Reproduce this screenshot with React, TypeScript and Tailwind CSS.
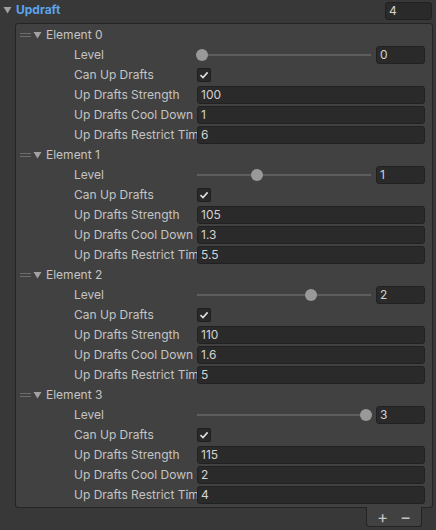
import type { ReactNode } from "react";

type Updraft = { level: number; strength: string; coolDown: string; restrict: string };

const elements: Updraft[] = [
  { level: 0, strength: "100", coolDown: "1", restrict: "6" },
  { level: 1, strength: "105", coolDown: "1.3", restrict: "5.5" },
  { level: 2, strength: "110", coolDown: "1.6", restrict: "5" },
  { level: 3, strength: "115", coolDown: "2", restrict: "4" },
];

const MAX_LEVEL = 3;

const Foldout = ({ className = "" }: { className?: string }) => (
  <svg width="9" height="8" viewBox="0 0 9 8" className={className}>
    <path d="M0.5 1 L8.5 1 L4.5 7.5 Z" fill="#a0a0a0" />
  </svg>
);

const Field = ({ children, className = "" }: { children: ReactNode; className?: string }) => (
  <div
    className={`flex h-[18px] items-center rounded-[3px] border border-[#212121] bg-[#2a2a2a] px-[3px] leading-[16px] text-[#d2d2d2] ${className}`}
  >
    {children}
  </div>
);

const Row = ({ label, children }: { label: string; children: ReactNode }) => (
  <div className="flex h-[20px] items-center pl-[58px]">
    <div className="w-[123px] shrink-0 overflow-hidden whitespace-nowrap leading-[16px] text-[#c4c4c4]">
      {label}
    </div>
    <div className="flex w-[228px] items-center">{children}</div>
  </div>
);

const Slider = ({ value }: { value: number }) => {
  const left = 5 + (value / MAX_LEVEL) * 164;
  return (
    <div className="flex w-full items-center">
      <div className="relative h-[18px] w-[174px]">
        <div className="absolute left-0 right-0 top-[8px] h-[2px] bg-[#5e5e5e]" />
        <div
          className="absolute top-[3px] h-[12px] w-[12px] -translate-x-1/2 rounded-full bg-[#999999]"
          style={{ left }}
        />
      </div>
      <Field className="ml-[5px] w-[49px]">{value}</Field>
    </div>
  );
};

const Checkbox = () => (
  <div className="flex h-[14px] w-[14px] items-center justify-center rounded-[2px] border border-[#1e1e1e] bg-[#2a2a2a]">
    <svg width="10" height="10" viewBox="0 0 10 10">
      <path d="M1.5 5.2 L4 7.6 L8.6 2.4" fill="none" stroke="#e0e0e0" strokeWidth="1.6" />
    </svg>
  </div>
);

const Element = ({ index, item }: { index: number; item: Updraft }) => (
  <div>
    <div className="flex h-[20px] items-center pl-[4px]">
      <div className="flex w-[11px] flex-col gap-[2px]">
        <div className="h-[1px] bg-[#6e6e6e]" />
        <div className="h-[1px] bg-[#6e6e6e]" />
      </div>
      <Foldout className="ml-[2px]" />
      <span className="ml-[4px] leading-[16px] text-[#c4c4c4]">Element {index}</span>
    </div>
    <Row label="Level">
      <Slider value={item.level} />
    </Row>
    <Row label="Can Up Drafts">
      <Checkbox />
    </Row>
    <Row label="Up Drafts Strength">
      <Field className="w-full">{item.strength}</Field>
    </Row>
    <Row label="Up Drafts Cool Down">
      <Field className="w-full">{item.coolDown}</Field>
    </Row>
    <Row label="Up Drafts Restrict Time">
      <Field className="w-full">{item.restrict}</Field>
    </Row>
  </div>
);

export default function App() {
  return (
    <div
      className="h-[530px] w-[436px] overflow-hidden bg-[#383838] text-[12px] leading-none"
      style={{ fontFamily: "Inter, 'Noto Sans', sans-serif" }}
    >
      <div className="flex h-[20px] items-center pl-[3px]">
        <Foldout />
        <span className="ml-[4px] font-bold leading-[16px] text-[#5aa5ec]">Updraft</span>
        <Field className="ml-auto mr-[4px] mt-[1px] w-[47px]">{elements.length}</Field>
      </div>
      <div className="ml-[15px] mt-[3px] w-[418px]">
        <div className="rounded-[3px] border border-[#242424] bg-[#414141] pb-[2px] pt-[1px]">
          {elements.map((item, i) => (
            <Element key={i} index={i} item={item} />
          ))}
        </div>
        <div className="flex justify-end pr-[11px]">
          <div className="-mt-[1px] flex h-[20px] w-[56px] items-center justify-around rounded-b-[3px] border border-t-0 border-[#242424] bg-[#414141] px-[4px] text-[17px] leading-[18px] text-[#c4c4c4]">
            <span>+</span>
            <span>−</span>
          </div>
        </div>
      </div>
    </div>
  );
}
